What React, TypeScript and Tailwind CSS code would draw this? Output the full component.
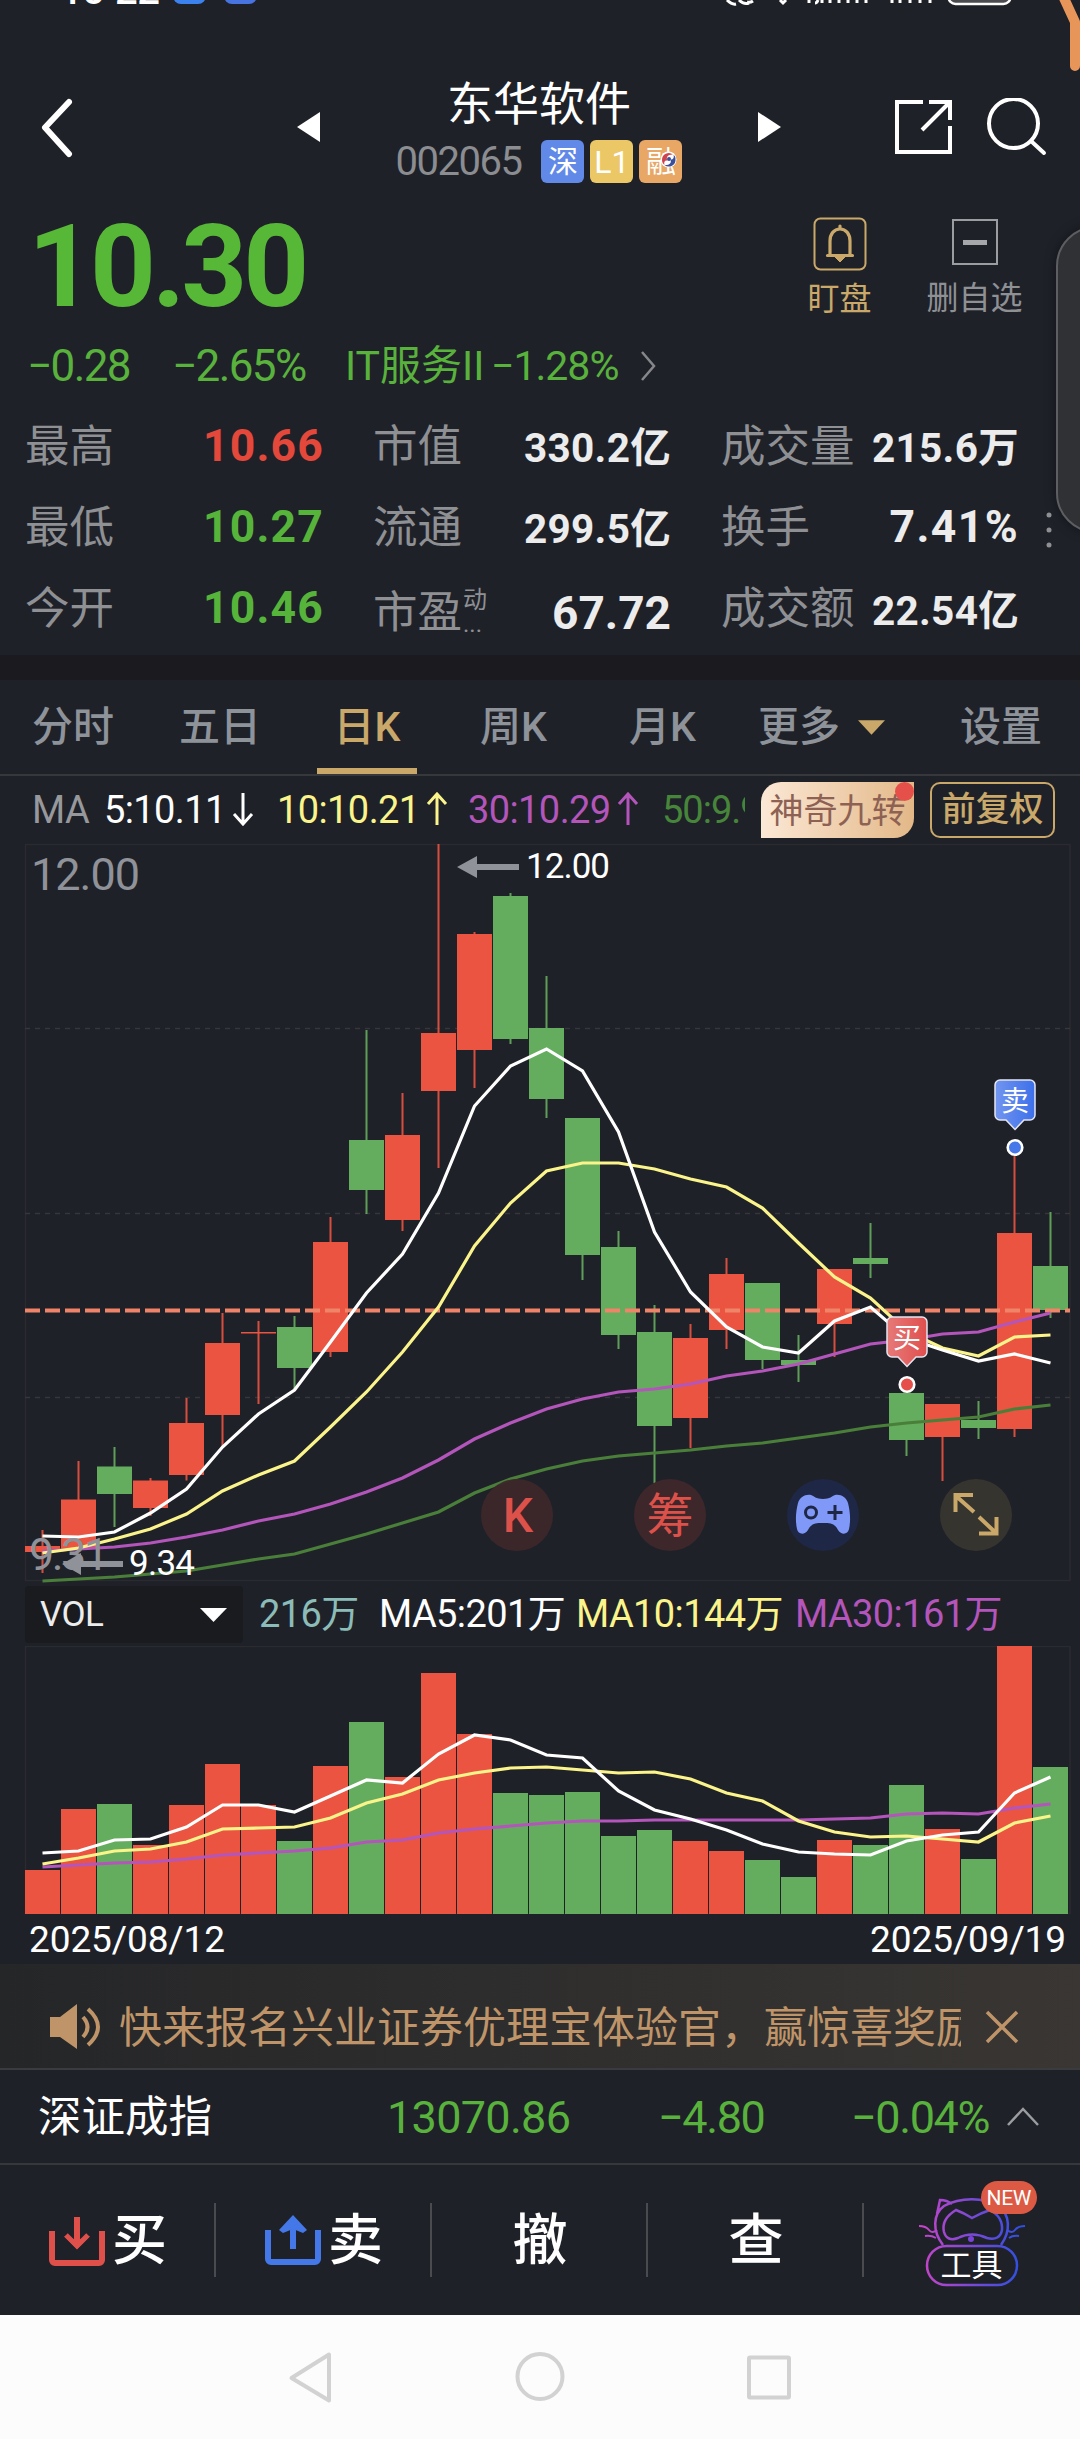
import React from 'react';

type Candle = [up: number, high: number, top: number, bottom: number, low: number, volTop: number];

// up (1) / down (0), high, body top, body bottom, low, top of the volume bar
const CANDLES: Candle[] = [
    [1, 1530, 1546, 1552, 1573, 1870],
    [1, 1461, 1499.5, 1549, 1549, 1809],
    [0, 1447, 1466.5, 1494, 1527, 1804],
    [1, 1478, 1480.5, 1508, 1516, 1845],
    [1, 1398, 1423, 1475, 1480.5, 1805],
    [1, 1313, 1343, 1415, 1447, 1764],
    [1, 1321, 1332, 1333.5, 1404, 1805],
    [0, 1316, 1327, 1368, 1390, 1841],
    [1, 1217, 1242, 1352, 1357, 1766],
    [0, 1030, 1140, 1190, 1214, 1722],
    [1, 1093, 1135, 1220, 1231, 1777],
    [1, 844, 1033, 1091, 1168, 1673],
    [1, 932, 934, 1050, 1088, 1734],
    [0, 893, 896, 1039, 1044, 1793],
    [0, 976, 1028, 1099, 1118, 1795],
    [0, 1118, 1118, 1255, 1280, 1792],
    [0, 1231, 1247, 1335, 1349, 1836],
    [0, 1305, 1332, 1426, 1483, 1830],
    [1, 1324, 1338, 1418, 1448, 1841],
    [1, 1258, 1274, 1330, 1349, 1851],
    [0, 1283, 1283, 1360, 1369, 1860],
    [0, 1335, 1360, 1365, 1382, 1877],
    [1, 1269, 1269, 1324, 1357, 1840],
    [0, 1223, 1258, 1264, 1278, 1845],
    [0, 1393, 1393, 1440, 1456, 1785],
    [1, 1404, 1404, 1437, 1481, 1829],
    [0, 1401, 1420, 1428, 1439, 1859],
    [1, 1156, 1233, 1429, 1437, 1646],
    [0, 1212, 1266, 1310, 1318, 1767],
];

const PRICE_LINES = [
    { color: '#4a7f3a', data: [1581, 1579, 1577, 1574, 1571, 1565, 1559, 1554, 1544, 1534, 1523, 1512, 1493, 1479, 1469, 1461, 1456, 1453, 1450, 1446, 1443, 1438, 1433, 1427, 1423, 1420, 1417, 1409, 1405] },
    { color: '#b455bb', data: [1551, 1549, 1547, 1543, 1537, 1530, 1521, 1514, 1504, 1492, 1478, 1460, 1439, 1423, 1409, 1399, 1392, 1389, 1384, 1376, 1371, 1364, 1354, 1344, 1340, 1334, 1332, 1322, 1313] },
    { color: '#fbf48a', data: [1553, 1548, 1539, 1529, 1514, 1491, 1475, 1461, 1427, 1392, 1352, 1307, 1246, 1203, 1171, 1163, 1163, 1169, 1179, 1187, 1208, 1243, 1277, 1298, 1331, 1348, 1356, 1337, 1335] },
    { color: '#ffffff', data: [1536, 1537, 1532, 1513, 1489, 1447, 1414, 1390, 1342, 1293, 1254, 1193, 1106, 1066, 1049, 1071, 1132, 1232, 1292, 1327, 1347, 1353, 1321, 1307, 1338, 1350, 1361, 1354, 1363] },
];

const VOLUME_LINES = [
    { color: '#b455bb', data: [1867, 1865, 1863, 1862, 1859, 1855, 1853, 1851, 1848, 1842, 1840, 1833, 1829, 1826, 1823, 1821, 1821, 1820, 1820, 1820, 1820, 1820, 1819, 1818, 1814, 1813, 1814, 1808, 1804] },
    { color: '#fbf48a', data: [1864, 1858, 1851, 1849, 1842, 1829, 1828, 1827, 1818, 1803, 1794, 1780, 1773, 1768, 1767, 1770, 1773, 1772, 1779, 1793, 1801, 1821, 1832, 1837, 1836, 1839, 1842, 1823, 1816] },
    { color: '#ffffff', data: [1853, 1851, 1840, 1839, 1827, 1805, 1805, 1812, 1796, 1780, 1783, 1754, 1735, 1740, 1755, 1758, 1791, 1810, 1819, 1830, 1844, 1852, 1854, 1855, 1841, 1835, 1832, 1793, 1777] },
];

const STEP = 36;
const RED = '#ea5440';
const GREEN = '#64ad5e';

const colorOf = (c: Candle) => (c[0] ? RED : GREEN);
const toPoints = (data: number[]) => data.map((y, i) => `${42.5 + i * STEP},${y}`).join(' ');

const Header: React.FC = () => (
    <header className="flex h-[124px] items-center pl-[38px]">
        <svg width="36" height="60" viewBox="0 0 36 60" fill="none" stroke="#fff" strokeWidth="6" strokeLinecap="round" strokeLinejoin="round">
            <path d="M31 4 7 29.500 31 56" />
        </svg>
        <svg className="ml-[223px]" width="23" height="32" viewBox="0 0 23 32" fill="#fff"><path d="M0 15 23 0v30z" /></svg>
        <div className="flex w-[438px] flex-col items-center pt-[4px]">
            <h1 className="text-[46px] leading-[54px] text-white">东华软件</h1>
            <div className="mt-[9px] flex items-center gap-[6px]">
                <span className="mr-[14px] text-[40px] leading-[43px] tracking-[-1.5px] text-[#8b8d90]">002065</span>
                <span className="flex size-[43px] items-center justify-center rounded-[6px] bg-[#6189e8] text-[30px] leading-none text-white">深</span>
                <span className="flex size-[43px] items-center justify-center rounded-[6px] bg-[#ecc766] text-[32px] leading-none text-white">L1</span>
                <span className="relative flex size-[43px] items-center justify-center rounded-[6px] bg-[#e8a765] text-[30px] leading-none text-white">
                    融
                    <svg className="absolute top-[11px] left-[21px]" width="17" height="17" viewBox="0 0 17 17">
                        <circle cx="8.500" cy="8.500" r="8" fill="#fff" />
                        <path d="M13 3.500A6.800 6.800 0 0 0 2 9c0 2 1 4 2.500 5C3.500 10.500 5 9 7.500 9.500 5.500 6 8.500 3 13 3.500z" fill="#d0434d" />
                        <path d="M4.500 14A6.800 6.800 0 0 0 15.500 8c0-2-1-3.500-2-4.200 1 3.200-.5 5-3 4.700C12 12 9 14.500 4.500 14z" fill="#3b4f9a" />
                        <circle cx="9" cy="8" r="2" fill="#3b4f9a" />
                    </svg>
                </span>
            </div>
        </div>
        <svg width="23" height="32" viewBox="0 0 23 32" fill="#fff"><path d="M23 15 0 0v30z" /></svg>
        <svg className="ml-[112px]" width="62" height="60" viewBox="0 0 62 60" fill="none" stroke="#fff" strokeWidth="4">
            <path d="M30 4H4v50h53V28M36 4h21v18M57 4 29 32" />
        </svg>
        <svg className="ml-[31px]" width="62" height="60" viewBox="0 0 62 60" fill="none" stroke="#fff" strokeWidth="4" strokeLinecap="round">
            <circle cx="27.500" cy="25.500" r="24.500" />
            <path d="m45 43 13 12" />
        </svg>
    </header>
);

const Price: React.FC = () => (
    <section className="flex h-[150px]">
        <div className="flex-1 pl-[28px] text-[115px] leading-[154px] font-bold tracking-[-4px] text-[#56b836]">10.30</div>
        <div className="flex w-[135px] flex-col items-center pt-[27px]">
            <svg width="54" height="54" viewBox="0 0 54 54" fill="none" stroke="#c9a869">
                <rect x="1.500" y="1.500" width="51" height="51" rx="6" strokeWidth="2" />
                <path d="M14.500 38.500h25M17 38V24c0-7 4-12 10-12s10 5 10 12v14M27 12V9" strokeWidth="3.200" strokeLinecap="round" />
                <path d="M22 40h10l-5 5z" fill="#c9a869" />
            </svg>
            <span className="mt-[11px] text-[32px] leading-[34px] text-[#c9a869]">盯盘</span>
        </div>
        <div className="mr-[38px] flex w-[135px] flex-col items-center pt-[27px]">
            <div className="mt-[2px] flex size-[46px] items-center justify-center border-2 border-[#9b9da0]">
                <div className="h-[5px] w-[24px] bg-[#a5a7aa]" />
            </div>
            <span className="mt-[16px] text-[32px] leading-[34px] text-[#8e9094]">删自选</span>
        </div>
    </section>
);

const Change: React.FC = () => (
    <section className="flex h-[65px] pl-[27px] text-[44px] leading-[53px] tracking-[-1.6px] text-[#58b23c]">
        <span className="w-[145px]">−0.28</span>
        <span className="w-[173px]">−2.65%</span>
        <span className="w-[146px] text-[41px] tracking-normal">IT服务II</span>
        <span className="w-[148px] text-[41px] tracking-[-1px]">−1.28%</span>
        <svg className="mt-[10px]" width="20" height="32" viewBox="0 0 20 32" fill="none" stroke="#85878a" strokeWidth="2.500"><path d="m3 2 12 14L3 30" /></svg>
    </section>
);

const Stats: React.FC = () => (
    <section className="grid h-[250px] auto-rows-[81px] grid-cols-[348px_348px_323px] text-[44.5px] leading-[85px] text-[#8e9093]">
        <div className="flex justify-between pr-[24px] pl-[25px]">最高<b className="leading-[83px] tracking-[1.2px] text-[#e4483a]">10.66</b></div>
        <div className="flex justify-between pr-[25px] pl-[25px]">市值<b className="leading-[86px] text-[40.5px] tracking-[0.3px] text-[#ececec]">330.2亿</b></div>
        <div className="flex justify-between pl-[25px]">成交量<b className="leading-[86px] text-[40.5px] tracking-[0.3px] text-[#ececec]">215.6万</b></div>
        <div className="flex justify-between pr-[24px] pl-[25px]">最低<b className="leading-[83px] tracking-[1.2px] text-[#56b43a]">10.27</b></div>
        <div className="flex justify-between pr-[25px] pl-[25px]">流通<b className="leading-[86px] text-[40.5px] tracking-[0.3px] text-[#ececec]">299.5亿</b></div>
        <div className="flex justify-between pl-[25px]">换手<b className="leading-[83px] tracking-[1.4px] text-[#ececec]">7.41%</b></div>
        <div className="flex justify-between pr-[24px] pl-[25px]">今开<b className="leading-[83px] tracking-[1.2px] text-[#56b43a]">10.46</b></div>
        <div className="flex pt-[4px] pr-[25px] pl-[25px]">
            市盈
            <span className="flex flex-1 flex-col pt-[16px] pl-[1px] text-[24px] leading-[26px]">
                动<span className="leading-[22px]">...</span>
            </span>
            <b className="text-[46px] text-[#ececec]">67.72</b>
        </div>
        <div className="flex justify-between pl-[25px]">成交额<b className="pt-[2px] text-[40.5px] tracking-[0.3px] text-[#ececec]">22.54亿</b></div>
    </section>
);

const Tabs: React.FC = () => (
    <nav className="flex h-[96px] border-b-2 border-[#37383b] text-[41px] leading-[94px] font-medium text-[#8e9299]">
        <span className="w-[147px] pl-[32px]">分时</span>
        <span className="w-[170px] pl-[32px]">五日</span>
        <span className="relative w-[100px] text-center text-[#c9a869]">
            日K
            <i className="absolute bottom-0 left-0 h-[6px] w-full bg-[#c9a869]" />
        </span>
        <span className="w-[212px] pl-[63px]">周K</span>
        <span className="w-[129px]">月K</span>
        <span className="flex w-[202px] items-center gap-[18px]">
            更多
            <svg width="27" height="15" viewBox="0 0 28 15" fill="#c9a869"><path d="M0 0h28L14 15z" /></svg>
        </span>
        <span>设置</span>
    </nav>
);

const Arrow: React.FC<{ down?: boolean }> = ({ down }) => (
    <svg className={down ? 'ml-[6px] inline-block rotate-180 align-[-3px]' : 'ml-[6px] inline-block align-[-3px]'} width="22" height="34" viewBox="0 0 22 34" fill="none" stroke="currentColor" strokeWidth="3">
        <path d="M11 33V3M2 12l9-10 9 10" />
    </svg>
);

const MaRow: React.FC = () => (
    <div className="flex h-[67px] pl-[32px] text-[38px] leading-[68px] whitespace-nowrap">
        <div className="flex w-[713px] overflow-hidden tracking-[-0.6px]">
            <span className="w-[72px] shrink-0 text-[#96989b]">MA</span>
            <span className="w-[173px] shrink-0 text-white">5:10.11<Arrow down /></span>
            <span className="w-[191px] shrink-0 text-[#fbf48a]">10:10.21<Arrow /></span>
            <span className="w-[194px] shrink-0 text-[#b455bb]">30:10.29<Arrow /></span>
            <span className="shrink-0 tracking-[-1px] text-[#47863a]">50:9.97</span>
        </div>
        <div className="relative mt-[6px] ml-[16px] h-[56px] w-[153px] rounded-tl-[20px] rounded-br-[20px] bg-linear-to-r from-[#fbe8d5] to-[#e3b888] text-center text-[34px] leading-[58px] text-[#8d6153]">
            神奇九转
            <i className="absolute top-0 right-0 size-[19px] rounded-full bg-[#e5504a]" />
        </div>
        <div className="mt-[6px] ml-[16px] h-[56px] w-[125px] rounded-[10px] border-2 border-[#c9a869] text-center text-[34px] leading-[50px] font-medium text-[#c9a869]">前复权</div>
    </div>
);

const Marker: React.FC<{ x: number; y: number; from: string; to: string; dot: string; label: string }> = ({ x, y, from, to, dot, label }) => (
    <g transform={`translate(${x} ${y})`}>
        <defs>
            <linearGradient id={label}><stop stopColor={from} /><stop offset="1" stopColor={to} /></linearGradient>
        </defs>
        <path d="M-15-20.500h30a5 5 0 0 1 5 5v30a5 5 0 0 1-5 5H9L0 29-9 19.500h-6a5 5 0 0 1-5-5v-30a5 5 0 0 1 5-5z" fill={`url(#${label})`} stroke="#e4e6f2" strokeWidth="1.500" />
        <text x="0" y="10" fontSize="28" textAnchor="middle" fill="#fff">{label}</text>
        <circle cx="0" cy="47" r="7.300" fill={dot} stroke="#fff" strokeWidth="2.600" />
    </g>
);

const PriceChart: React.FC = () => (
    <svg className="block" width="1080" height="741" viewBox="0 843 1080 741">
        <rect x="25.500" y="844.500" width="1044.500" height="736" fill="none" stroke="#2a2b2f" strokeWidth="1.500" />
        {[1028.5, 1213.5, 1397.5].map(y => (
            <path key={y} d={`M25 ${y}h1045`} stroke="#35373b" strokeWidth="1.600" strokeDasharray="5 5" />
        ))}
        {CANDLES.map((c, i) => (
            <g key={i} fill={colorOf(c)}>
                <rect x={41.5 + i * STEP} y={c[1]} width="2" height={c[4] - c[1]} opacity="0.9" />
                <rect x={25 + i * STEP} y={c[2]} width="35" height={c[3] - c[2]} />
            </g>
        ))}
        <path d="M25 1310.500h1045" stroke="#f08468" strokeWidth="4.200" strokeDasharray="15 5" />
        {PRICE_LINES.map(l => (
            <polyline key={l.color} points={toPoints(l.data)} fill="none" stroke={l.color} strokeWidth="3.200" />
        ))}

        {/* Axis labels and extremes */}
        <text x="31" y="890" fontSize="45" fill="#8f9298" textLength="109">12.00</text>
        <text x="29" y="1570" fontSize="45" fill="#8f9298" textLength="80">9.31</text>
        <path d="m457 867 20-11v8h42v6h-42v8z" fill="#8f9298" />
        <text x="526" y="878" fontSize="35" fill="#fff" textLength="84">12.00</text>
        <path d="m62 1564 19-11v8h42v6H81v8z" fill="#8f9298" />
        <text x="129" y="1575" fontSize="35" fill="#fff" textLength="66">9.34</text>

        <Marker x={907} y={1337.5} from="#e67a78" to="#e04f4e" dot="#e5504a" label="买" />
        <Marker x={1015} y={1100.5} from="#7295f0" to="#3c70ea" dot="#4778ea" label="卖" />

        {/* Floating tools */}
        <circle cx="517" cy="1515" r="36" fill="#3d272a" fillOpacity="0.950" />
        <text x="518" y="1532" fontSize="48" fontWeight="500" textAnchor="middle" fill="#dd514b">K</text>
        <circle cx="670" cy="1515" r="36" fill="#3d272a" />
        <text x="670" y="1532" fontSize="47" textAnchor="middle" fill="#dd514b">筹</text>
        <circle cx="823" cy="1515" r="36" fill="#1e2745" />
        <path d="M811 1495c-6-1-11 2-13 8-2 8-3 17-1 26 1 5 7 7 11 1 3-6 6-7 15-7s12 1 15 7c4 6 10 4 11-1 2-9 1-18-1-26-2-6-7-9-13-8-3 1-5 4-12 4s-9-3-12-4z" fill="#8098f8" />
        <circle cx="811" cy="1512.500" r="5.500" fill="none" stroke="#1e2745" strokeWidth="3" />
        <path d="M827.500 1512.500h15M835 1505v15" stroke="#1e2745" strokeWidth="3" />
        <circle cx="976" cy="1515" r="36" fill="#36342f" />
        <path d="M955.500 1512v-17H973M956 1496l18 16M996.500 1517v16.500H979M996 1533l-17-16" fill="none" stroke="#c9a869" strokeWidth="4" />
    </svg>
);

const VolumeRow: React.FC = () => (
    <div className="flex h-[62px] pt-[2px] pl-[25px] text-[38px] leading-[56px] tracking-[-0.6px] whitespace-nowrap">
        <div className="flex h-[57px] w-[218px] items-center justify-between rounded-[4px] bg-[#191b1f] pr-[16px] pl-[15px] text-[35px] text-[#ececec]">
            VOL
            <svg width="27" height="14" viewBox="0 0 27 14" fill="#fff"><path d="M0 0h27L13.500 14z" /></svg>
        </div>
        <span className="ml-[16px] w-[120px] text-[#8cbcb8]">216万</span>
        <span className="w-[197px] text-white">MA5:201万</span>
        <span className="w-[219px] text-[#fbf48a]">MA10:144万</span>
        <span className="text-[#b455bb]">MA30:161万</span>
    </div>
);

const VolumeChart: React.FC = () => (
    <svg className="block" width="1080" height="268" viewBox="0 1646 1080 268">
        <rect x="25.500" y="1646.500" width="1044.500" height="267" fill="none" stroke="#2a2b2f" strokeWidth="1.500" />
        {CANDLES.map((c, i) => (
            <rect key={i} x={25 + i * STEP} y={c[5]} width="35" height={1914 - c[5]} fill={colorOf(c)} />
        ))}
        {VOLUME_LINES.map(l => (
            <polyline key={l.color} points={toPoints(l.data)} fill="none" stroke={l.color} strokeWidth="3.200" />
        ))}
    </svg>
);

const Notice: React.FC = () => (
    <div className="flex h-[106px] items-center border-b-2 border-[#3a3b3f] bg-linear-to-r from-[#252628] to-[#393633] pl-[50px] text-[#bf9468]">
        <svg className="mt-[22px]" width="52" height="46" viewBox="0 0 52 46" fill="none" stroke="#bf9468" strokeWidth="4">
            <path d="M0 13h10L27 0v45L10 33H0z" fill="#bf9468" stroke="none" />
            <path d="M33 13q9 10 0 20M38 5q20 18 0 36" />
        </svg>
        <div className="mt-[24px] ml-[17px] w-[842px] overflow-hidden text-[43px] leading-[56px] whitespace-nowrap">快来报名兴业证券优理宝体验官，赢惊喜奖励</div>
        <svg className="mt-[22px] ml-[24px]" width="34" height="34" viewBox="0 0 34 34" stroke="#bf9468" strokeWidth="3.500"><path d="m2 2 30 30M32 2 2 32" /></svg>
    </div>
);

const IndexRow: React.FC = () => (
    <div className="flex h-[95px] border-b-2 border-[#37383b] pl-[38px] text-[45px] leading-[95px] tracking-[-0.7px] text-[#58b23c]">
        <span className="w-[349px] text-[43.500px] tracking-normal text-white">深证成指</span>
        <span className="w-[271px]">13070.86</span>
        <span className="w-[193px] tracking-[-1.4px]">−4.80</span>
        <span className="w-[155px] tracking-[-1.4px]">−0.04%</span>
        <svg className="mt-[35px]" width="34" height="22" viewBox="0 0 34 22" fill="none" stroke="#9b9da0" strokeWidth="2.500"><path d="M2 20 17 4l15 16" /></svg>
    </div>
);

const Toolbar: React.FC = () => (
    <div className="flex h-[150px] text-[55px] leading-none text-white">
        {['买', '卖', '撤', '查'].map((label, i) => (
            <div key={label} className="relative flex w-[216px] items-center justify-center gap-[7px]">
                {i === 0 && (
                    <svg className="mt-[2px]" width="56" height="50" viewBox="0 0 56 50" fill="none" stroke="#e0504b" strokeWidth="6">
                        <path d="M3 15v29a3 3 0 0 0 3 3h44a3 3 0 0 0 3-3V15M28 1v26" />
                        <path d="m15 20 13 4 13-4-13 13z" fill="#e0504b" stroke="none" />
                        <path d="m17 19 11 11 11-11" strokeWidth="5" />
                    </svg>
                )}
                {i === 1 && (
                    <svg width="56" height="50" viewBox="0 0 56 50" fill="none" stroke="#4477e8" strokeWidth="6">
                        <path d="M3 15v29a3 3 0 0 0 3 3h44a3 3 0 0 0 3-3V15M28 8v26" />
                        <path d="M28 0 42 15l-4 3-10-4-10 4-4-3z" fill="#4477e8" stroke="none" />
                    </svg>
                )}
                <span className="font-medium">{label}</span>
                <i className="absolute top-[38px] right-0 h-[74px] w-[2px] bg-[#4a4b4e]" />
            </div>
        ))}
        <div className="pt-[14px] pl-[54px]">
            <svg width="122" height="112" viewBox="918 2179 122 112" fill="none">
                <defs>
                    <linearGradient id="neon" x1="920" y1="0" x2="1022" y2="0" gradientUnits="userSpaceOnUse">
                        <stop stopColor="#c944c8" />
                        <stop offset="1" stopColor="#2d50e0" />
                    </linearGradient>
                </defs>
                <g stroke="url(#neon)" strokeWidth="2.500">
                    <path d="M943 2245c-11-14-10-31 1-39 16-9 40-9 55 0 11 9 12 25 2 39M937 2214l3-14q7 0 12 4" />
                    <path d="M956 2210q-15 9-12 22 3 10 14 6 14-7 29 0 13 3 15-8 1-13-12-20-9 3-18 8-8-5-16-8z" />
                    <path d="M919 2226q7 0 10 4t8 0M925 2236q6-1 11 2M1025 2226q-7 0-10 4t-8 0M1019 2236q-6-1-10 2" strokeWidth="2" />
                    <rect x="927" y="2246" width="90" height="39" rx="19.500" />
                </g>
                <circle cx="971" cy="2239" r="3" fill="#7a44d8" />
                <text x="971.500" y="2276" fontSize="31" textAnchor="middle" fill="#fff">工具</text>
                <rect x="981" y="2181" width="56" height="33" rx="16.500" fill="#dc5a43" />
                <text x="1009" y="2205" fontSize="21" textAnchor="middle" fill="#fff" textLength="45">NEW</text>
            </svg>
        </div>
    </div>
);

const SystemNav: React.FC = () => (
    <div className="h-[124px] bg-[#fcfcfc]">
        <svg width="1080" height="124" viewBox="0 2315 1080 124" fill="none" stroke="#d2d2d2" strokeWidth="4" strokeLinejoin="round">
            <path d="m291.500 2378 37.500-23.500v46z" />
            <circle cx="540" cy="2376.500" r="22.500" />
            <rect x="749" y="2357.500" width="40" height="40" rx="1" />
        </svg>
    </div>
);

const App: React.FC = () => (
    <div className="relative h-[2439px] w-[1080px] overflow-hidden bg-[#1f2129] font-['Roboto','Noto_Sans_CJK_SC',sans-serif]">
        {/* Bottom edge of the status bar */}
        <svg className="block" width="1080" height="66" viewBox="0 0 1080 66" fill="none">
            <text x="60" y="4" fontSize="40" fontWeight="500" fill="#fff" textLength="100">10<tspan dy="-5">:</tspan><tspan dy="5">22</tspan></text>
            <rect x="173" y="-28" width="33" height="32" rx="8" fill="#3c82ee" />
            <rect x="224" y="-28" width="33" height="32" rx="8" fill="#4774e0" />
            <path d="M727 0q5 5 9 4M739 0q5 5 10 3M753 1q-3 2-6 1M780 0l3 3 3-3M809 0v3M818 0q-1 3-3 3M822 0v3M830 0v3M839 0v3M848 0v3M857 0v3M866 0v3M892 0v3M900 0v3M910 0v3M920 0v3M930 0v3" stroke="#fff" strokeWidth="3" />
            <rect x="948.500" y="-30" width="62" height="34" rx="7" fill="#4b4c4f" stroke="#fff" strokeWidth="2.500" />
        </svg>
        <Header />
        <Price />
        <Change />
        <Stats />
        <div className="h-[25px] bg-[#1b1a1e]" />
        <Tabs />
        <MaRow />
        <PriceChart />
        <VolumeRow />
        <VolumeChart />
        <div className="flex h-[50px] justify-between pr-[14px] pl-[29px] text-[37px] leading-[52px] tracking-[-0.1px] text-white">
            <span>2025/08/12</span>
            <span>2025/09/19</span>
        </div>
        <Notice />
        <IndexRow />
        <Toolbar />
        <SystemNav />

        {/* Things floating over the right edge */}
        <svg className="absolute top-0 right-0" width="24" height="72" viewBox="0 0 24 72" fill="none">
            <path d="M7-4 19 22v44" stroke="#e8955a" strokeWidth="10" strokeLinecap="round" strokeLinejoin="round" />
        </svg>
        <div className="absolute top-[226px] left-[1056px] h-[307px] w-[80px] rounded-[46px] border-2 border-[#5d5e61] bg-[#303134] shadow-[0_0_12px_rgba(0,0,0,0.4)]" />
        <svg className="absolute top-[510px] left-[1044px]" width="10" height="40" viewBox="0 0 10 40" fill="#8e9093">
            <circle cx="5" cy="5" r="2.500" />
            <circle cx="5" cy="20" r="2.500" />
            <circle cx="5" cy="35" r="2.500" />
        </svg>
    </div>
);

export default App;
